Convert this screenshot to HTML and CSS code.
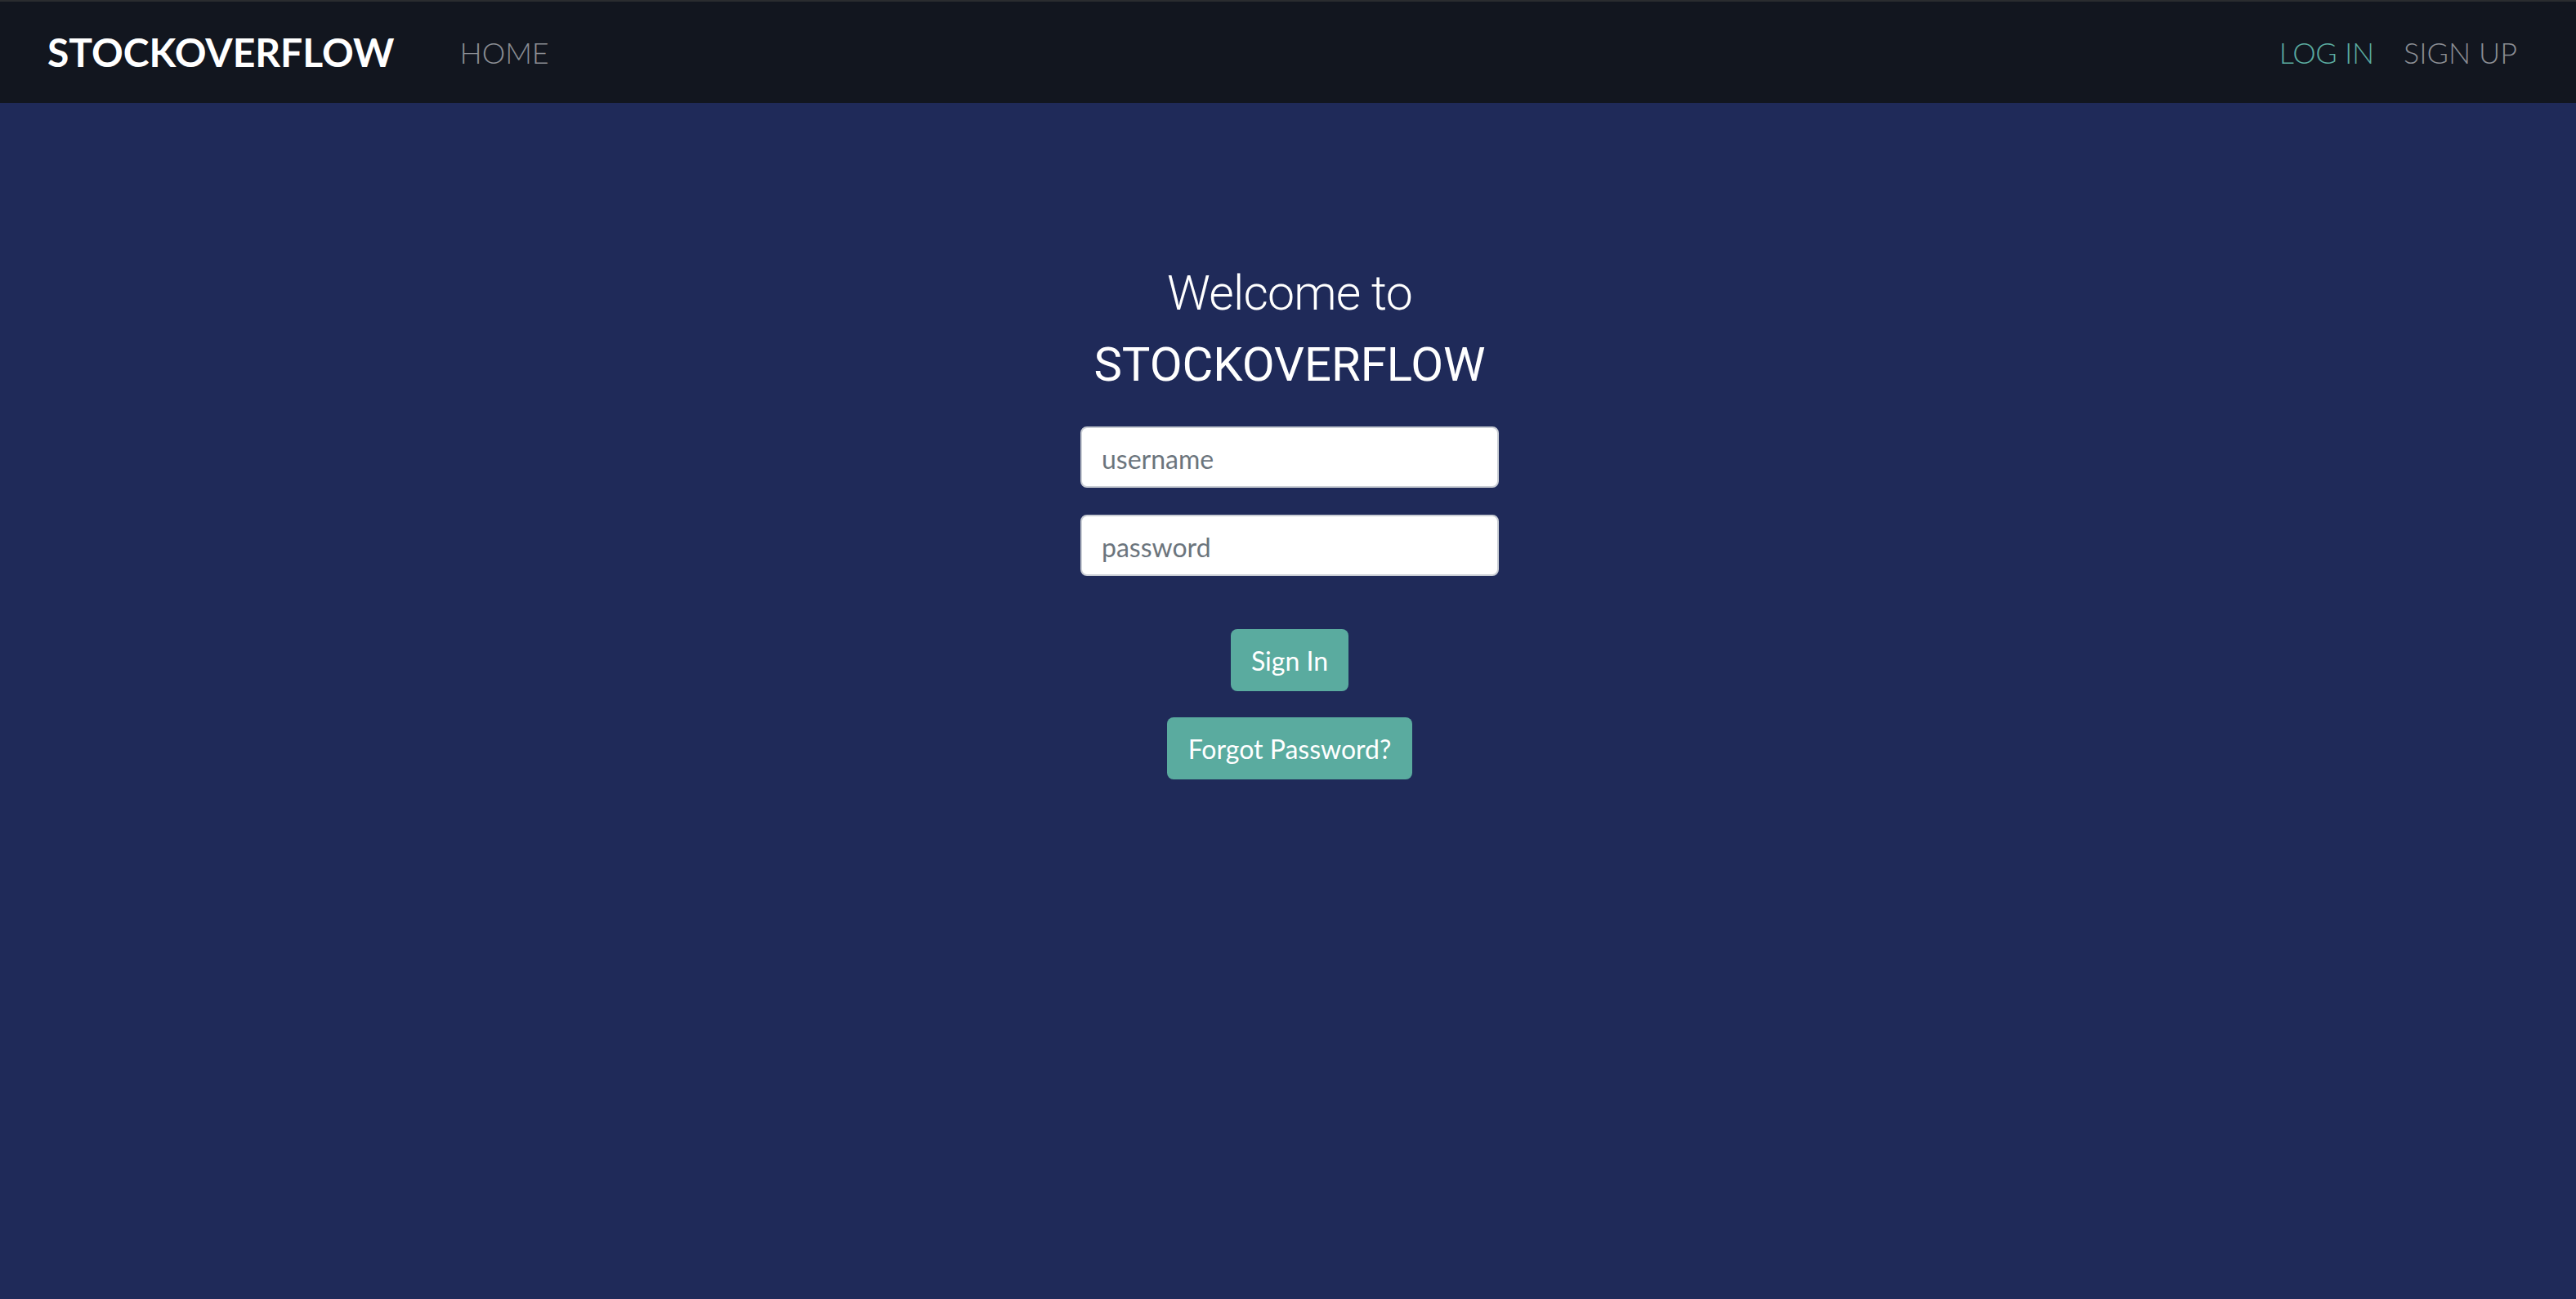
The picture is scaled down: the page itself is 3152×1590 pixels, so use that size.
FILE: index.html
```html
<!DOCTYPE html>
<html lang="en">
<head>
<meta charset="utf-8">
<title>StockOverflow - Log In</title>
<link rel="stylesheet" href="styles.css">
</head>
<body>
<nav class="navbar">
  <div class="nav-left">
    <a class="brand" href="#">STOCKOVERFLOW</a>
    <a class="nav-link" href="#">HOME</a>
  </div>
  <div class="nav-right">
    <a class="nav-link active" href="#">LOG IN</a>
    <a class="nav-link" href="#">SIGN UP</a>
  </div>
</nav>
<main class="main">
  <form class="login">
    <h1 class="welcome">Welcome to</h1>
    <h2 class="title">STOCKOVERFLOW</h2>
    <input class="field" type="text" placeholder="username">
    <input class="field" type="password" placeholder="password">
    <button class="btn btn-signin" type="button">Sign In</button>
    <button class="btn btn-forgot" type="button">Forgot Password?</button>
  </form>
</main>
</body>
</html>
```
FILE: styles.css
```css
html, body {
  margin: 0;
  padding: 0;
  height: 100%;
}
body {
  background: #1f2a59;
  font-family: Lato, "Noto Sans", sans-serif;
  display: flex;
  flex-direction: column;
}
.navbar {
  box-sizing: border-box;
  height: 126px;
  border-top: 2px solid #2a2c2f;
  background: #12161f;
  display: flex;
  align-items: center;
  justify-content: space-between;
  padding: 0 72px 0 58px;
}
.nav-left, .nav-right {
  display: flex;
  align-items: center;
}
.nav-right {
  gap: 36px;
}
.brand {
  font-family: Lato, sans-serif;
  font-weight: 700;
  font-size: 48px;
  color: #ffffff;
  text-decoration: none;
  margin-right: 80px;
  line-height: 1;
}
.nav-link {
  font-family: Lato, sans-serif;
  font-weight: 300;
  font-size: 36px;
  color: #8a8d93;
  text-decoration: none;
  line-height: 1;
}
.nav-link.active {
  color: #5aab9f;
  letter-spacing: -0.3px;
}
.main {
  flex: 1;
  background: #1f2a59;
}
.login {
  display: flex;
  flex-direction: column;
  align-items: center;
  padding: 197px 0 0 4px;
}
.welcome {
  margin: 0;
  font-family: Roboto, sans-serif;
  font-weight: 300;
  font-size: 59px;
  letter-spacing: -0.8px;
  line-height: 72px;
  color: #ffffff;
}
.title {
  margin: 16px 0 0;
  font-family: Roboto, sans-serif;
  font-weight: 400;
  font-size: 58px;
  line-height: 70px;
  color: #ffffff;
}
.field {
  box-sizing: border-box;
  width: 512px;
  height: 75px;
  margin: 41px 0 0;
  padding: 4px 24px 0;
  border: 2px solid #c9cdd4;
  border-radius: 8px;
  background: #ffffff;
  font-family: Lato, sans-serif;
  font-size: 32px;
  color: #495057;
  outline: none;
}
.field + .field {
  margin-top: 33px;
}
.field::placeholder {
  color: #6c757d;
}
.btn {
  box-sizing: border-box;
  height: 76px;
  border: none;
  border-radius: 8px;
  background: #5aab9f;
  color: #ffffff;
  font-family: Lato, sans-serif;
  font-size: 32px;
  padding: 0;
  white-space: nowrap;
  cursor: pointer;
}
.btn-signin {
  margin-top: 65px;
  width: 144px;
}
.btn-forgot {
  margin-top: 32px;
  width: 300px;
}
```
